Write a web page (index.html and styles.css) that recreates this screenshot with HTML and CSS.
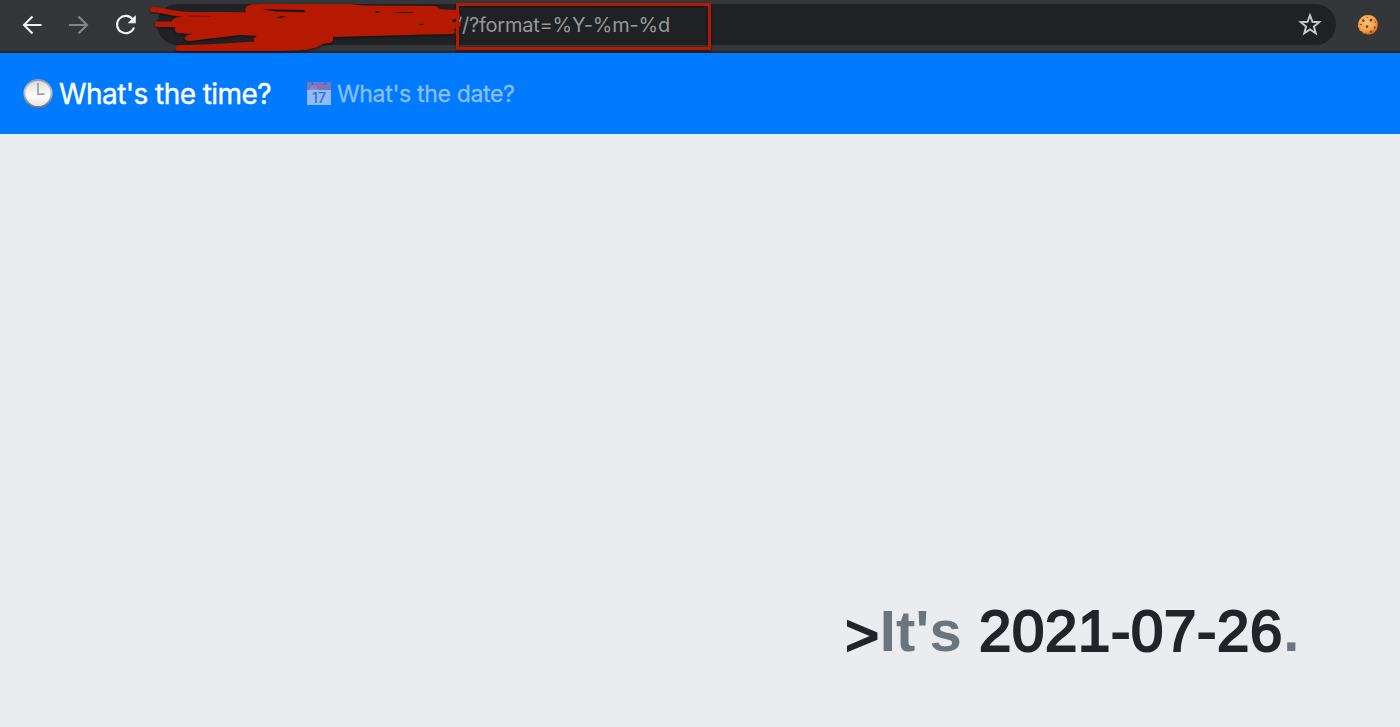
FILE: index.html
```html
<!DOCTYPE html>
<html lang="en">
<head>
<meta charset="utf-8">
<title>What's the time?</title>
<link rel="stylesheet" href="styles.css">
</head>
<body>
<div class="toolbar">
  <div class="controls">
    <svg class="icon" viewBox="0 0 24 24"><path d="M21.500 12H4M12.500 3.500 4 12l8.500 8.500"/></svg>
    <svg class="icon muted" viewBox="0 0 24 24"><path d="M2 12H20M11.500 3.500 20 12l-8.500 8.500"/></svg>
    <svg class="icon" viewBox="0 0 24 24"><path d="M18.900 6.500A8.700 8.700 0 1 0 20 14.500"/><path class="solid" d="M21.800 2v8.300h-8.200z"/></svg>
  </div>
  <div class="address">
    <span class="url">//?format=%Y-%m-%d</span>
    <svg class="star" viewBox="0 0 24 24"><path d="m12 3.900 2.250 6.100 6.250.3-4.900 4 1.700 6.300-5.300-3.600-5.300 3.600 1.700-6.300-4.900-4 6.250-.3z"/></svg>
  </div>
  <svg class="cookie" viewBox="0 0 22 22">
    <defs><radialGradient id="dough" cx=".42" cy=".36" r=".7"><stop offset="0" stop-color="#ffc270"/><stop offset=".65" stop-color="#f3a047"/><stop offset="1" stop-color="#bd590b"/></radialGradient></defs>
    <path fill="url(#dough)" d="M5 3 7 1.500 11 1l4 .5 3 2 2.500 4 .3 5-1.400 4-3.400 3.200-5 1-3-1.200-1.800.2-1-2.200-2.400-.4-.6-2.400-1.200-2L1.400 8l1.400-2.800z"/>
    <g fill="#70401d"><circle cx="6.300" cy="6.600" r="1.300"/><circle cx="14" cy="6.200" r="1.400"/><circle cx="10" cy="12.600" r="1.300"/><circle cx="17.700" cy="13.500" r="1"/><circle cx="14" cy="17.600" r="1.200"/><circle cx="4" cy="10.500" r=".8"/><circle cx="10.200" cy="3.500" r=".6"/><circle cx="18.300" cy="8" r=".7"/></g>
  </svg>
  <svg class="markup" viewBox="0 0 720 56">
    <g class="ink">
      <path class="stroke" d="M152.700 9.500C163 9.800 172 14 188 14.500L256 15M157.700 24.300H180M178 48.300 300 47.500"/>
      <path fill-rule="evenodd" d="M171 21.500 174 18.500 177 17.200 187 16.500 212 16.800 213 15.800 187 15.300 190 12.500 246 13 245 9 247 6 251 4.500 260 4H350L363 5.500 436 6 440 9 458 10 460 15 459 18 452 20 453 22 460 22 461 26 454 29 455 32 453 34 428 34.500 333 37 333 41 330 43 323 44 316 47.500 305 50 280 51 178 51 178 45.500 220 43.700 254 41.500 253.500 38 257 36 240 35 190 41 186 40.500 184.500 38 187 35.500 192 34 177 33 175 31V27H168zM262 9.300 304 10 305.500 12.300 275 11.500zM276 17.300 283 16 286 16.500 282 17.700zM375 12 377 11 380 12.300 376 13zM391 12.600 413 12V12.800L400 13zM418 24.300 422 23.700 425 24.300 421 24.800z"/>
      <path class="gap" d="M188 16 211 16.500"/>
      <rect class="frame" x="457.500" y="4.500" width="252" height="44"/>
    </g>
  </svg>
</div>
<nav class="nav">
  <a class="brand">
    <svg class="clock" viewBox="0 0 30 30">
      <defs><linearGradient id="face" x2="0" y2="1"><stop stop-color="#d9d9dc"/><stop offset=".6" stop-color="#fff"/><stop offset="1" stop-color="#dedede"/></linearGradient><linearGradient id="rim" x2="0" y2="1"><stop stop-color="#999"/><stop offset=".4" stop-color="#c5c5c5"/><stop offset="1" stop-color="#777"/></linearGradient></defs>
      <circle cx="15" cy="14.500" r="13.600" fill="url(#face)" stroke="url(#rim)" stroke-width="2"/>
      <path d="M15 4V15.200h6.500" fill="none" stroke="#9e9e9e" stroke-width="1.700"/>
    </svg><span class="brand-text">What's the time?</span>
  </a>
  <a class="link">
    <svg class="calendar" viewBox="0 0 24 24">
      <path fill="#8cbbff" d="M0 8h24v15H0z"/><path fill="#8073b9" d="M0 0h24v8H0z"/>
      <g fill="#087dfa"><circle cx="5.500" cy="1.500" r="1.300"/><circle cx="18.300" cy="1.500" r="1.300"/></g>
      <text class="month" x="2" y="7.500">JUL</text><text class="day" x="12" y="20.500">17</text>
    </svg><span class="link-text">What's the date?</span>
  </a>
</nav>
<main class="stage">
  <h1 class="result"><span class="prompt">&gt;</span><span class="dim its">It's</span> 2021-07-26<span class="dim">.</span></h1>
</main>
</body>
</html>
```
FILE: styles.css
```css
* { box-sizing: border-box; }
body {
  margin: 0;
  height: 727px;
  overflow: hidden;
  display: flex;
  flex-direction: column;
  background: #ebecf0;
  font-family: Inter, "Liberation Sans", sans-serif;
}
.toolbar {
  position: relative;
  height: 53px;
  flex: none;
  display: flex;
  align-items: center;
  padding: 0 20px 3px;
  background: #35363a;
  border-bottom: 2px solid #242529;
}
.controls { display: flex; gap: 23px; width: 137px; flex: none; padding-top: 2px; }
.icon { width: 24px; height: 24px; fill: none; stroke: #f1f2f3; stroke-width: 2.1; }
.muted { stroke: #85868a; }
.solid { fill: #f1f2f3; stroke: none; }
.address {
  width: 1179px;
  height: 41px;
  flex: none;
  display: flex;
  align-items: center;
  justify-content: space-between;
  padding: 0 13px 0 298px;
  border-radius: 21px;
  background: #202124;
}
.url { padding-top: 2px; font-size: 20px; letter-spacing: -.22px; color: #97989a; white-space: nowrap; }
.star { width: 26px; height: 26px; fill: none; stroke: #c9cacc; stroke-width: 1.8; }
.cookie { width: 22px; height: 22px; margin: 2px 0 0 21px; flex: none; }
.markup { position: absolute; left: 0; top: 0; width: 720px; height: 56px; z-index: 1; overflow: visible; }
.ink { fill: #b51a00; filter: drop-shadow(0 1px 1px rgba(0, 0, 0, .55)); }
.stroke { fill: none; stroke: #b51a00; stroke-width: 5.4; stroke-linecap: round; }
.gap { fill: none; stroke: #5e1609; stroke-width: .8; }
.frame { fill: none; stroke: #b51a00; stroke-width: 3; }
.nav {
  height: 81px;
  flex: none;
  display: flex;
  align-items: center;
  gap: 35px;
  padding-left: 23px;
  background: #007bff;
}
.brand, .link { display: flex; align-items: center; white-space: nowrap; }
.brand { width: 249px; gap: 6px; color: #fff; font-size: 28px; }
.link { gap: 6px; color: #8cbfff; font-size: 23px; }
.clock { width: 30px; height: 30px; flex: none; }
.calendar { width: 24px; height: 24px; flex: none; }
.month { font: 5px Inter, sans-serif; fill: #9da9e5; }
.day { font: 500 14px Inter, sans-serif; fill: #3c6fac; text-anchor: middle; }
.brand-text { letter-spacing: -.57px; -webkit-text-stroke: .4px currentColor; }
.link-text { letter-spacing: -.32px; -webkit-text-stroke: .3px currentColor; }
.stage {
  flex: 1;
  display: flex;
  justify-content: flex-end;
  align-items: flex-end;
  padding: 0 100px 63px 0;
}
.result {
  margin: 0;
  font: 400 58px/66px "Liberation Sans", sans-serif;
  letter-spacing: .75px;
  color: #212529;
  -webkit-text-stroke: 2.2px currentColor;
  white-space: nowrap;
}
.prompt { display: inline-block; transform: translateY(4px); }
.dim { color: #6c757d; font-weight: 700; -webkit-text-stroke: 0; }
.its { letter-spacing: .2px; }
```
